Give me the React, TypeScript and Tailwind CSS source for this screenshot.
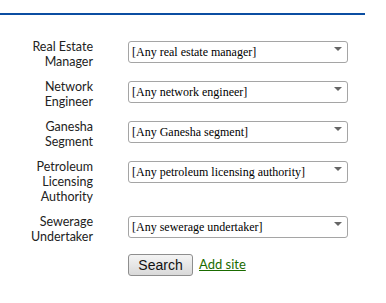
import React from 'react';

const fields = [
  { label: ['Real Estate', 'Manager'], placeholder: '[Any real estate manager]' },
  { label: ['Network', 'Engineer'], placeholder: '[Any network engineer]' },
  { label: ['Ganesha', 'Segment'], placeholder: '[Any Ganesha segment]' },
  { label: ['Petroleum', 'Licensing', 'Authority'], placeholder: '[Any petroleum licensing authority]' },
  { label: ['Sewerage', 'Undertaker'], placeholder: '[Any sewerage undertaker]' },
];

const SelectBox = ({ placeholder }: { placeholder: string }) => (
  <div className="relative h-[22px] w-[220px]">
    <select
      defaultValue=""
      className="h-full w-full appearance-none rounded-[3px] border border-[#a5a5a5] bg-white pl-[3px] pr-5 text-[12px] text-black outline-none"
      style={{ fontFamily: '"Liberation Serif", serif' }}
    >
      <option value="">{placeholder}</option>
    </select>
    <span className="pointer-events-none absolute right-[6px] top-[9px] h-0 w-0 border-x-[4px] border-t-[4px] border-x-transparent border-t-[#666]" />
  </div>
);

export default function App() {
  return (
    <div className="h-[303px] w-[386px] bg-white" style={{ fontFamily: 'Lato, "Open Sans", sans-serif' }}>
      <div className="pt-[13px]">
        <div className="h-[2px] w-[365px] bg-[#0b4ea2]" />
      </div>
      <form className="mt-[23px] grid grid-cols-[93px_220px] gap-x-[35px] gap-y-[9px]">
        {fields.map((f) => (
          <React.Fragment key={f.placeholder}>
            <label className="pt-[1px] text-right text-[12.5px] leading-[15px] text-[#222]">
              {f.label.map((l) => (
                <div key={l}>{l}</div>
              ))}
            </label>
            <SelectBox placeholder={f.placeholder} />
          </React.Fragment>
        ))}
        <div />
        <div className="flex items-center gap-[6px] pt-[1px]">
          <button
            type="button"
            className="h-[22px] w-[65px] rounded-[3px] border border-[#8e8e8e] bg-gradient-to-b from-[#f4f4f4] to-[#d9d9d9] text-[14px] leading-none text-[#111]"
            style={{ fontFamily: '"Liberation Sans", Arial, sans-serif' }}
          >
            Search
          </button>
          <a href="#" className="text-[13px] text-[#1a6b00] underline">
            Add site
          </a>
        </div>
      </form>
    </div>
  );
}
